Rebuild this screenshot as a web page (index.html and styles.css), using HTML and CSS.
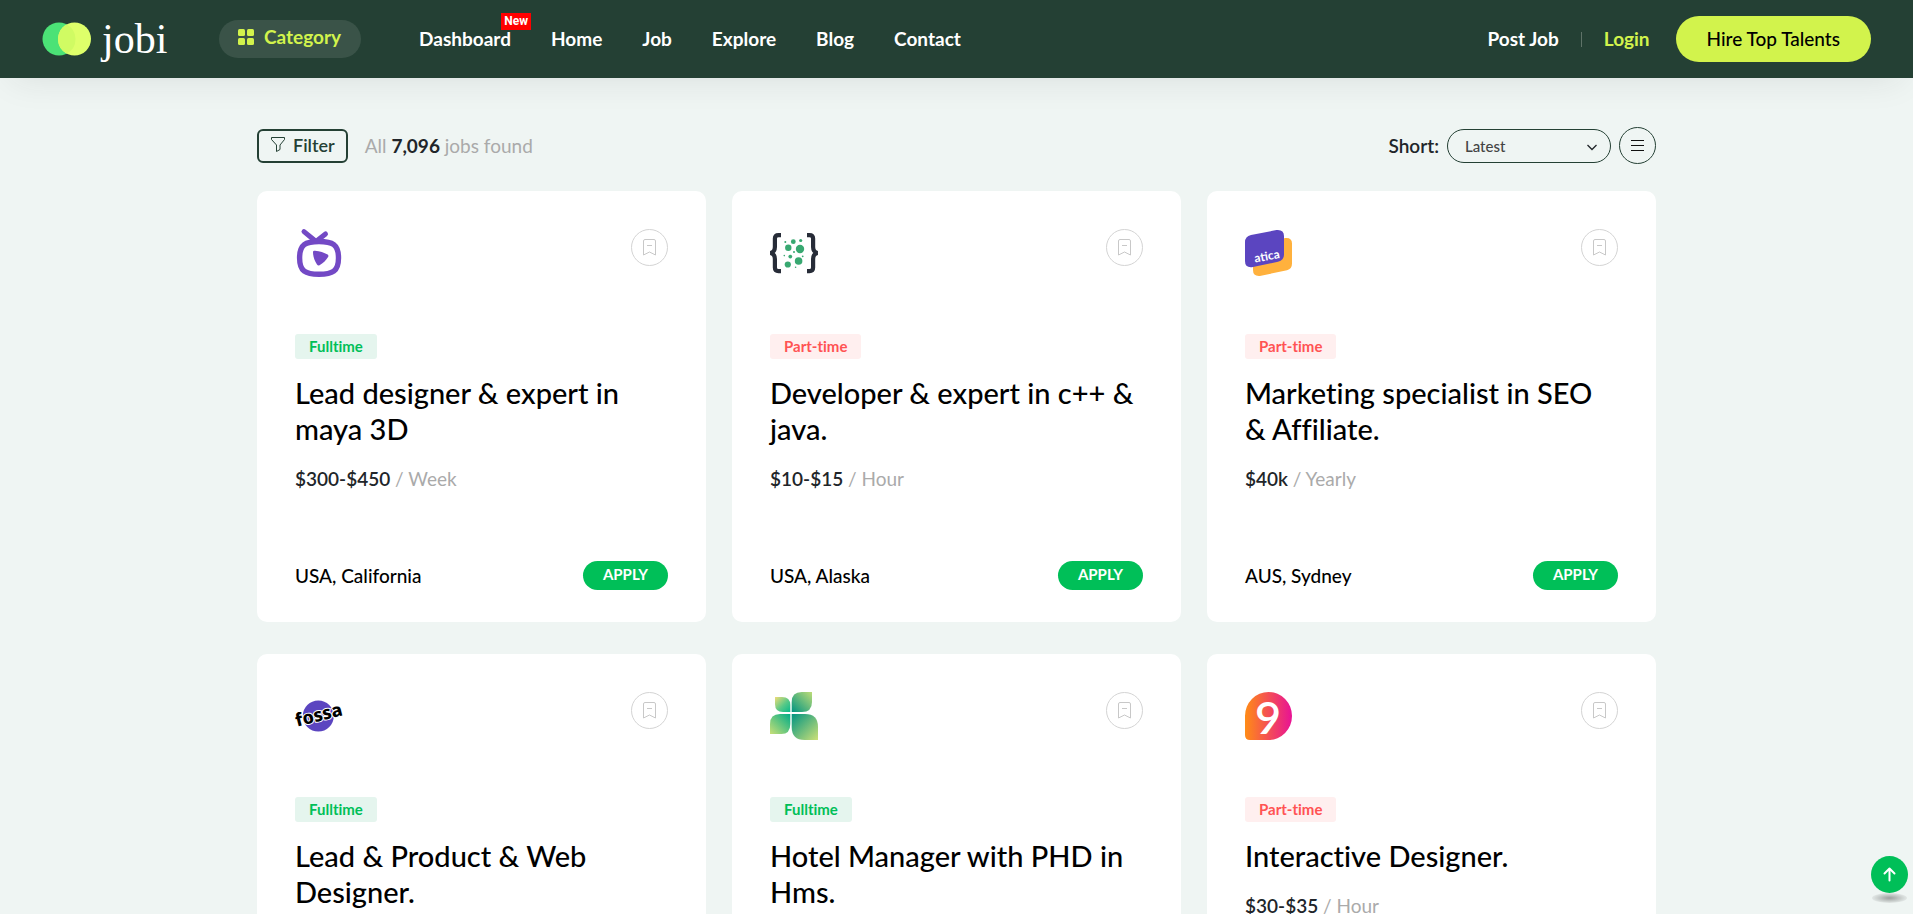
FILE: index.html
```html
<!DOCTYPE html>
<html lang="en">
<head>
<meta charset="utf-8">
<meta name="viewport" content="width=device-width, initial-scale=1">
<title>Jobi - Job list</title>
<link rel="stylesheet" href="styles.css">
</head>
<body>
<svg class="sprite" aria-hidden="true">
  <symbol id="bookmark" viewBox="0 0 17 17">
    <path fill="none" stroke="currentColor" stroke-linejoin="round" d="M2.500 16V2q0-1.500 1.500-1.500h9q1.500 0 1.500 1.500v14l-6-3zM6 6.500h5"/>
  </symbol>
</svg>

<header class="site-header">
  <a class="brand" href="#" aria-label="jobi">
    <svg class="brand-mark" viewBox="0 0 49 34" aria-hidden="true">
      <circle cx="17" cy="17" r="16.500" fill="#4be276"/>
      <circle cx="32.500" cy="17" r="16.500" fill="#deff6a"/>
      <path d="M24.750 2.430a16.500 16.500 0 0 0 0 29.140 16.500 16.500 0 0 0 0-29.140z" fill="#d0fb63"/>
    </svg>
    <span class="brand-name">jobi</span>
  </a>
  <button class="category" type="button">
    <svg class="category-icon" viewBox="0 0 16 16" aria-hidden="true" fill="currentColor">
      <rect width="7" height="7" rx="1.500"/><rect x="9" width="7" height="7" rx="1.500"/>
      <rect y="9" width="7" height="7" rx="1.500"/><rect x="9" y="9" width="7" height="7" rx="1.500"/>
    </svg>
    <span>Category</span>
  </button>
  <nav class="main-nav" aria-label="Main">
    <a class="has-badge" href="#">Dashboard<span class="badge">New</span></a>
    <a href="#">Home</a>
    <a href="#">Job</a>
    <a href="#">Explore</a>
    <a href="#">Blog</a>
    <a href="#">Contact</a>
  </nav>
  <div class="account">
    <a class="post-job" href="#">Post Job</a>
    <a class="login" href="#">Login</a>
    <a class="hire" href="#">Hire Top Talents</a>
  </div>
</header>

<main class="container">
  <div class="toolbar">
    <button class="filter" type="button">
      <svg class="filter-icon" viewBox="0 0 14 15" aria-hidden="true" fill="none" stroke="currentColor" stroke-linejoin="round"><path d="M.5.5h13v2L9 8v4.500L5.500 14.500V8L.5 2.500z"/></svg>
      <span>Filter</span>
    </button>
    <p class="total">All <b>7,096</b> jobs found</p>
    <div class="sorting">
      <label for="sort">Short:</label>
      <div class="select-wrap">
        <select id="sort"><option>Latest</option><option>Category</option><option>Job Type</option></select>
        <svg class="chevron" viewBox="0 0 10 7" aria-hidden="true" fill="none" stroke="currentColor" stroke-width="1.300"><path d="M.5 1 5 5.500 9.500 1"/></svg>
      </div>
      <button class="round dark" type="button" aria-label="List view">
        <svg class="list-icon" viewBox="0 0 13 13" aria-hidden="true" stroke="currentColor" stroke-width="1.200"><path d="M0 1.500h13M0 6.500h13M0 11.500h13"/></svg>
      </button>
    </div>
  </div>

  <div class="jobs">
    <article class="card">
      <div class="card-top">
        <svg class="logo" viewBox="0 0 48 48" aria-hidden="true">
          <g fill="none" stroke="#7349c5" stroke-linecap="round">
            <path d="M9 2.600 21 12.500 30.500 5" stroke-width="5" stroke-linejoin="round"/>
            <path d="M24 12.500c-13.500 0-19.400 3-19.400 16.500S10.500 45.300 24 45.300 43.500 42.500 43.500 29 37.500 12.500 24 12.500z" stroke-width="5.400"/>
          </g>
          <path d="M20 21.700c5 .4 9 1.700 12.600 3.900 1 .6 1 1.700.3 2.600-2 3-4.700 6-8.400 8.100-1 .5-1.900.2-2.500-.8-2.400-3.800-4-8-4-12.400 0-1 .9-1.500 2-1.400z" fill="#7349c5"/>
        </svg>
        <button class="round" type="button" aria-label="Save job"><svg class="save-icon"><use href="#bookmark"/></svg></button>
      </div>
      <a class="tag full" href="#">Fulltime</a>
      <h2><a href="#">Lead designer &amp; expert in maya 3D</a></h2>
      <p class="salary"><b>$300-$450</b> / Week</p>
      <div class="card-foot"><span>USA, California</span><a class="apply" href="#">APPLY</a></div>
    </article>

    <article class="card">
      <div class="card-top">
        <svg class="logo" viewBox="0 0 48 48" aria-hidden="true">
          <g fill="none" stroke="#272c38" stroke-width="4.200">
            <path d="M11 6.100H8.500Q4.900 6.100 4.900 9.600V18Q4.900 23 .5 24 4.900 25 4.900 30v8.500q0 3.600 3.600 3.600H11"/>
            <path d="M37 6.100h2.500q3.600 0 3.600 3.500V18q0 5 4.400 6-4.400 1-4.400 6v8.500q0 3.600-3.600 3.600H37"/>
          </g>
          <g fill="#38a871">
            <circle cx="15.300" cy="13" r="1"/><circle cx="23.300" cy="12.700" r="2.400"/><circle cx="30.700" cy="11.500" r="1.600"/>
            <circle cx="18.300" cy="18.800" r="3.200"/><circle cx="30" cy="20" r="4.200"/><circle cx="24" cy="23" r="1"/>
            <circle cx="14.300" cy="26.600" r=".8"/><circle cx="20.300" cy="27.600" r="1.900"/><circle cx="32.700" cy="27.300" r=".9"/>
            <circle cx="28.600" cy="32" r="3.800"/><circle cx="17.800" cy="35.500" r="3.100"/><circle cx="25.600" cy="38.200" r=".8"/>
          </g>
        </svg>
        <button class="round" type="button" aria-label="Save job"><svg class="save-icon"><use href="#bookmark"/></svg></button>
      </div>
      <a class="tag part" href="#">Part-time</a>
      <h2><a href="#">Developer &amp; expert in c++ &amp; java.</a></h2>
      <p class="salary"><b>$10-$15</b> / Hour</p>
      <div class="card-foot"><span>USA, Alaska</span><a class="apply" href="#">APPLY</a></div>
    </article>

    <article class="card">
      <div class="card-top">
        <svg class="logo" viewBox="0 0 48 48" aria-hidden="true">
          <path d="M14 14 40.500 9Q47 8.500 47 14.500V34.500Q47 40 42 41.200L16 46.800Q8 48 8 41V20Q8.500 15 14 14z" fill="#ffb13d"/>
          <path d="M6 6 31.500 1Q39 .3 39 7V25.500Q39 31.500 33 32.800L8 38Q0 39.300 0 32V13Q0 7.500 6 6z" fill="#5b45c0"/>
          <text class="atica-name" x="10" y="33.500" transform="rotate(-10 10 33.500)">atica</text>
        </svg>
        <button class="round" type="button" aria-label="Save job"><svg class="save-icon"><use href="#bookmark"/></svg></button>
      </div>
      <a class="tag part" href="#">Part-time</a>
      <h2><a href="#">Marketing specialist in SEO &amp; Affiliate.</a></h2>
      <p class="salary"><b>$40k</b> / Yearly</p>
      <div class="card-foot"><span>AUS, Sydney</span><a class="apply" href="#">APPLY</a></div>
    </article>

    <article class="card">
      <div class="card-top">
        <svg class="logo" viewBox="0 0 48 48" aria-hidden="true">
          <circle cx="23.300" cy="24" r="15.500" fill="#5b45c0"/>
          <text class="fossa-name" x="24" y="29" text-anchor="middle" transform="rotate(-14 24 24)">fossa</text>
        </svg>
        <button class="round" type="button" aria-label="Save job"><svg class="save-icon"><use href="#bookmark"/></svg></button>
      </div>
      <a class="tag full" href="#">Fulltime</a>
      <h2><a href="#">Lead &amp; Product &amp; Web Designer.</a></h2>
      <p class="salary"><b>$2k-3k</b> / Month</p>
      <div class="card-foot"><span>USA, California</span><a class="apply" href="#">APPLY</a></div>
    </article>

    <article class="card">
      <div class="card-top">
        <svg class="logo" viewBox="0 0 48 48" aria-hidden="true">
          <defs>
            <linearGradient id="leaf-a" x1="0" y1="0" x2="1" y2="1"><stop stop-color="#f0dc78"/><stop offset=".55" stop-color="#58c987"/><stop offset="1" stop-color="#08b98b"/></linearGradient>
            <linearGradient id="leaf-b" x1="1" y1="0" x2="0" y2="1"><stop stop-color="#bddc78"/><stop offset="1" stop-color="#009481"/></linearGradient>
            <linearGradient id="leaf-c" x1="0" y1="1" x2="1" y2="0"><stop stop-color="#c8df78"/><stop offset="1" stop-color="#00ad86"/></linearGradient>
            <linearGradient id="leaf-d" x1="1" y1="1" x2="0" y2="0"><stop stop-color="#cce078"/><stop offset="1" stop-color="#009481"/></linearGradient>
          </defs>
          <path d="M5 5h7q8.300 0 8.300 8v7H13q-8 0-8-8z" fill="url(#leaf-a)"/>
          <path d="M42 0v10q0 10-10 10H21.700V10q0-10 10-10z" fill="url(#leaf-b)"/>
          <path d="M0 42V32q0-10 10-10h10.300v10q0 10-9 10z" fill="url(#leaf-c)"/>
          <path d="M48 48V35q0-13-13-13H21.700v13q0 13 13 13z" fill="url(#leaf-d)"/>
        </svg>
        <button class="round" type="button" aria-label="Save job"><svg class="save-icon"><use href="#bookmark"/></svg></button>
      </div>
      <a class="tag full" href="#">Fulltime</a>
      <h2><a href="#">Hotel Manager with PHD in Hms.</a></h2>
      <p class="salary"><b>$50-$70</b> / Hour</p>
      <div class="card-foot"><span>USA, Alaska</span><a class="apply" href="#">APPLY</a></div>
    </article>

    <article class="card">
      <div class="card-top">
        <svg class="logo" viewBox="0 0 48 48" aria-hidden="true">
          <defs><linearGradient id="nine"><stop stop-color="#ff8c16"/><stop offset="1" stop-color="#e81295"/></linearGradient></defs>
          <path d="M23.500 0a23.500 24 0 0 1 0 48H5Q0 48 0 43V24A23.500 24 0 0 1 23.500 0z" fill="url(#nine)"/>
          <text class="nine-name" x="23" y="42" text-anchor="middle">9</text>
        </svg>
        <button class="round" type="button" aria-label="Save job"><svg class="save-icon"><use href="#bookmark"/></svg></button>
      </div>
      <a class="tag part" href="#">Part-time</a>
      <h2><a href="#">Interactive Designer.</a></h2>
      <p class="salary"><b>$30-$35</b> / Hour</p>
      <div class="card-foot"><span>AUS, Sydney</span><a class="apply" href="#">APPLY</a></div>
    </article>
  </div>
</main>

<button class="to-top" type="button" aria-label="Back to top">
  <svg class="to-top-icon" viewBox="0 0 13 15" aria-hidden="true" fill="none" stroke="currentColor" stroke-width="2" stroke-linecap="round" stroke-linejoin="round"><path d="M6.500 13.500V1.500M1.500 6.500l5-5 5 5"/></svg>
</button>
</body>
</html>
```
FILE: styles.css
```css
* { box-sizing: border-box; }

body {
  margin: 0;
  background: #eff5f3;
  color: #212529;
  font-family: Lato, "Open Sans", sans-serif;
  font-size: 19px;
  line-height: 24px;
  font-variant-ligatures: none;
}

a { color: inherit; text-decoration: none; }
button { font: inherit; cursor: pointer; }
p, h2 { margin: 0; }
svg { display: block; flex: none; }
.sprite { position: absolute; width: 0; height: 0; }

/* Header */
.site-header {
  display: flex;
  align-items: center;
  height: 78px;
  padding: 0 42px;
  background: #244034;
  color: #fff;
  font-weight: 700;
  box-shadow: 0 13px 35px -12px rgba(35, 35, 35, 0.1);
}

.brand { display: flex; align-items: center; gap: 11px; width: 177px; }
.brand-mark { width: 49px; height: 34px; }
.brand-name {
  font-family: "Liberation Serif", serif;
  font-size: 42px;
  font-weight: 400;
  line-height: 44px;
}

.category {
  display: flex;
  align-items: center;
  gap: 10px;
  height: 38px;
  padding: 0 20px 4px 19px;
  border: 0;
  border-radius: 20px;
  background: #3a5348;
  color: #d2f34c;
}
.category-icon { width: 16px; height: 16px; }

.main-nav { display: flex; gap: 40px; margin-left: 58px; }
.has-badge { position: relative; }
.badge {
  position: absolute;
  top: -14px;
  right: -20px;
  padding: 0 3px;
  background: #ff0000;
  font: 700 12px/17px Roboto, sans-serif;
}

.account { display: flex; align-items: center; margin-left: auto; }
.login { margin-left: 22px; color: #d2f34c; display: flex; align-items: center; gap: 22px; }
.login::before { content: ""; width: 1px; height: 15px; background: #5f7368; }
.hire {
  margin-left: 26px;
  padding: 0 31px;
  border-radius: 30px;
  background: #d2f34c;
  color: #000;
  font-weight: 500;
  line-height: 46px;
}

/* Toolbar */
.container { max-width: 1399px; margin: 0 auto; padding: 49px 0 80px; }
.toolbar { display: flex; align-items: center; margin-bottom: 27px; }
.filter {
  display: flex;
  align-items: center;
  gap: 8px;
  height: 34px;
  padding: 0 11px 2px 12px;
  border: 2px solid #244034;
  border-radius: 6px;
  background: transparent;
  color: #244034;
  font-size: 18px;
  font-weight: 600;
}
.filter-icon { width: 14px; height: 15px; }
.total { margin-left: 17px; color: #aaa; }
.total b { color: #212529; font-weight: 700; }
.sorting { display: flex; align-items: center; gap: 8px; margin-left: auto; font-weight: 600; }
.select-wrap { position: relative; }
.select-wrap select {
  appearance: none;
  display: block;
  width: 164px;
  height: 34px;
  padding: 0 17px;
  border: 1px solid #244034;
  border-radius: 17px;
  background: transparent;
  color: #444;
  font: 500 15px/24px Lato, sans-serif;
}
.chevron { position: absolute; top: 15px; right: 14px; width: 10px; height: 7px; color: #212529; pointer-events: none; }
.round {
  display: flex;
  align-items: center;
  justify-content: center;
  width: 37px;
  height: 37px;
  padding: 0;
  border: 1px solid #d4d4d4;
  border-radius: 50%;
  background: transparent;
  color: #c8c8c8;
}
.round.dark { border-color: #244034; color: #111; }
.list-icon { width: 13px; height: 13px; }
.save-icon { width: 17px; height: 17px; }

/* Job cards */
.jobs { display: grid; grid-template-columns: repeat(3, 1fr); gap: 32px 26px; }
.card {
  display: flex;
  flex-direction: column;
  align-items: flex-start;
  padding: 38px 38px 32px;
  border-radius: 10px;
  background: #fff;
}
.card-top { display: flex; justify-content: space-between; align-items: flex-start; align-self: stretch; }
.logo { width: 48px; height: 48px; overflow: visible; }
.atica-name { fill: #fff; font: 700 12px Lato, sans-serif; }
.fossa-name { fill: #000; stroke: #fff; stroke-width: 2px; paint-order: stroke; font: 800 18px "Noto Sans", sans-serif; }
.nine-name { fill: #fff; font: 600 45px Lato, sans-serif; }

.tag {
  margin-top: 57px;
  padding: 0 14px 1px;
  border-radius: 3px;
  font-size: 15px;
  font-weight: 700;
  line-height: 24px;
}
.tag.full { background: #e5f5ee; color: #00bf58; }
.tag.part { background: #ffefef; color: #ff5353; }

.card h2 { margin-top: 16px; color: #000; font-size: 29px; font-weight: 500; line-height: 36px; }
.salary { margin-top: 20px; color: #aaa; }
.salary b { color: #212529; font-weight: 600; }
.card-foot {
  display: flex;
  align-items: center;
  justify-content: space-between;
  align-self: stretch;
  margin-top: auto;
  padding-top: 70px;
  color: #000;
  font-weight: 500;
}
.apply {
  padding: 0 20px 2px;
  border-radius: 20px;
  background: #00bf58;
  color: #fff;
  font-size: 15px;
  font-weight: 700;
  line-height: 27px;
}

.to-top {
  position: fixed;
  right: 5px;
  bottom: 21px;
  display: flex;
  align-items: center;
  justify-content: center;
  width: 37px;
  height: 37px;
  padding: 0;
  border: 0;
  border-radius: 50%;
  background: #00bf58;
  color: #fff;
}
.to-top::after {
  content: "";
  position: absolute;
  top: 100%;
  left: 1px;
  right: 1px;
  height: 10px;
  border-radius: 50%;
  background: radial-gradient(closest-side, rgba(0, 0, 0, 0.35), rgba(0, 0, 0, 0.05));
}
.to-top-icon { width: 13px; height: 15px; }
```
